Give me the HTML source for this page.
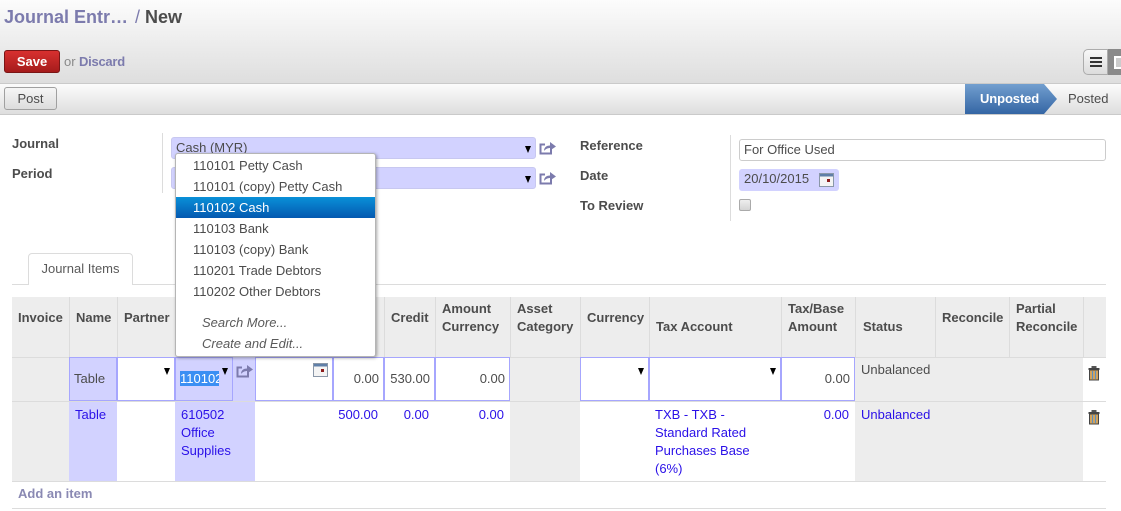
<!DOCTYPE html>
<html><head><meta charset="utf-8"><style>
html,body{margin:0;padding:0;background:#fff}
body{width:1121px;height:511px;overflow:hidden;position:relative;font:13px/18px "Liberation Sans",Arial,sans-serif;color:#4c4c4c}
.a,.a *{box-sizing:border-box}
.a{position:absolute;white-space:nowrap}
.b{font-weight:bold}
.g{background:#ededed}
.p{background:#d2d2ff}
.blue{color:#2a10e8}
.r{text-align:right}
.hd{font-weight:bold;color:#4c4c4c;line-height:18px}
.vl{width:1px;background:#dcdcdc;top:297px;height:60px}
.in{border:1px solid #a6a6fe;background:#fff}
.ip{border:1px solid #a6a6fe;background:#d2d2ff}
.ar{width:0;height:0;border-left:3.5px solid transparent;border-right:3.5px solid transparent;border-top:7px solid #000}
</style></head><body>
<!-- header -->
<div class="a" style="left:0;top:0;width:1121px;height:84px;background:linear-gradient(#fcfcfc,#dedede);border-bottom:1px solid #cacaca"></div>
<div class="a b" style="left:4px;top:6px;font-size:18px;line-height:22px;color:#7c7bad">Journal Entr…</div>
<div class="a" style="left:135px;top:6px;font-size:18px;line-height:22px;color:#7c7bad">/</div>
<div class="a b" style="left:145px;top:6px;font-size:18px;line-height:22px;color:#4c4c4c">New</div>
<div class="a b" style="left:4px;top:50px;width:56px;height:23px;border:1px solid #7a1616;border-radius:3px;background:linear-gradient(#d8302f,#a51c1c);color:#fff;text-align:center;line-height:21px;font-size:13px">Save</div>
<div class="a" style="left:64px;top:53px;color:#8a8a8a">or</div>
<div class="a b" style="left:79px;top:53px;color:#7c7bad;font-size:13px;letter-spacing:-.02em">Discard</div>
<!-- view switch -->
<div class="a" style="left:1083px;top:49px;width:25px;height:26px;border:1px solid #acacac;border-radius:5px 0 0 5px;background:linear-gradient(#f8f8f8,#dcdcdc)"></div>
<div class="a" style="left:1090px;top:57px;width:12px;height:2px;background:#333"></div>
<div class="a" style="left:1090px;top:61px;width:12px;height:2px;background:#333"></div>
<div class="a" style="left:1090px;top:65px;width:12px;height:2px;background:#333"></div>
<div class="a" style="left:1108px;top:49px;width:13px;height:26px;background:#8a8a8a"></div>
<div class="a" style="left:1114px;top:56px;width:7px;height:13px;border:2px solid #fff;border-right:0;background:#ccc"></div>
<!-- status bar -->
<div class="a" style="left:0;top:84px;width:1121px;height:31px;background:linear-gradient(#fcfcfc,#dedede);border-bottom:1px solid #cacaca"></div>
<div class="a" style="left:4px;top:87px;width:53px;height:23px;border:1px solid #a0a0a0;border-radius:3px;background:linear-gradient(#f6f6f6,#dcdcdc);text-align:center;line-height:21px;color:#4c4c4c">Post</div>
<svg class="a" style="left:965px;top:84px" width="94" height="31"><defs><linearGradient id="u" x1="0" y1="0" x2="0" y2="1"><stop offset="0" stop-color="#729fcf"/><stop offset="1" stop-color="#3465a4"/></linearGradient></defs><path d="M0 0H79L92 15L79 30H0Z" fill="url(#u)"/></svg>
<div class="a b" style="left:980px;top:90px;color:#fff;letter-spacing:-.1px">Unposted</div>
<div class="a" style="left:1068px;top:90px;color:#4c4c4c">Posted</div>
<!-- form -->
<div class="a b" style="left:12px;top:135px">Journal</div>
<div class="a b" style="left:12px;top:165px">Period</div>
<div class="a" style="left:162px;top:133px;width:1px;height:60px;background:#dcdcdc"></div>
<div class="a p" style="left:171px;top:137px;width:365px;height:22px;border-radius:3px;border:1px solid #c8c8f0;line-height:19px;padding-left:4px;color:#4c4c4c">Cash (MYR)</div>
<div class="a p" style="left:171px;top:167px;width:365px;height:22px;border-radius:3px;border:1px solid #c8c8f0"></div>
<div class="a ar" style="left:525px;top:146px"></div>
<div class="a ar" style="left:525px;top:176px"></div>
<svg class="a" style="left:539px;top:141px" width="18" height="15"><path d="M12 8V12.5H1.5V3.5H6" fill="none" stroke="#7c7bad" stroke-width="2"/><path d="M5 10C5 6 8 4.5 11 4.5V1L17 5.5L11 9.5V7C9 7 6.5 8 5 10Z" fill="#7c7bad"/></svg>
<svg class="a" style="left:539px;top:171px" width="18" height="15"><path d="M12 8V12.5H1.5V3.5H6" fill="none" stroke="#7c7bad" stroke-width="2"/><path d="M5 10C5 6 8 4.5 11 4.5V1L17 5.5L11 9.5V7C9 7 6.5 8 5 10Z" fill="#7c7bad"/></svg>
<div class="a b" style="left:580px;top:137px">Reference</div>
<div class="a b" style="left:580px;top:167px">Date</div>
<div class="a b" style="left:580px;top:197px">To Review</div>
<div class="a" style="left:730px;top:135px;width:1px;height:86px;background:#dcdcdc"></div>
<div class="a" style="left:739px;top:139px;width:367px;height:22px;border:1px solid #ccc;border-radius:3px;line-height:20px;padding-left:4px;color:#4c4c4c">For Office Used</div>
<div class="a p" style="left:739px;top:169px;width:100px;height:22px;border-radius:3px;line-height:20px;padding-left:5px;color:#4c4c4c">20/10/2015</div>
<svg class="a" style="left:819px;top:173px" width="15" height="14"><rect x=".5" y=".5" width="14" height="13" fill="#f4f4f4" stroke="#8a97a8"/><rect x="1" y="1" width="13" height="2.5" fill="#5f7fa8"/><rect x="8" y="6" width="3" height="3" fill="#8e1c1c"/></svg>
<div class="a" style="left:739px;top:199px;width:12px;height:12px;border:1px solid #aaa;border-radius:2px;background:linear-gradient(#eee,#d4d4d4)"></div>
<!-- tabs -->
<div class="a" style="left:12px;top:284px;width:1094px;height:1px;background:#dcdcdc"></div>
<div class="a" style="left:28px;top:253px;width:105px;height:32px;border:1px solid #dcdcdc;border-bottom:0;border-radius:4px 4px 0 0;background:#fff;text-align:center;line-height:29px;color:#5a5a5a">Journal Items</div>
<!-- table bg -->
<div class="a g" style="left:12px;top:297px;width:1094px;height:60px"></div>
<div class="a" style="left:12px;top:357px;width:1094px;height:1px;background:#dcdcdc"></div>
<div class="a g" style="left:12px;top:358px;width:57px;height:123px"></div>
<div class="a g" style="left:510px;top:358px;width:70px;height:123px"></div>
<div class="a g" style="left:855px;top:358px;width:228px;height:123px"></div>
<div class="a" style="left:12px;top:401px;width:1094px;height:1px;background:#dcdcdc"></div>
<div class="a" style="left:12px;top:481px;width:1094px;height:1px;background:#dcdcdc"></div>
<div class="a" style="left:12px;top:508px;width:1094px;height:1px;background:#dcdcdc"></div>
<div class="a vl" style="left:69px"></div><div class="a vl" style="left:117px"></div>
<div class="a vl" style="left:384px"></div><div class="a vl" style="left:435px"></div><div class="a vl" style="left:510px"></div>
<div class="a vl" style="left:580px"></div><div class="a vl" style="left:649px"></div><div class="a vl" style="left:781px"></div>
<div class="a vl" style="left:855px"></div><div class="a vl" style="left:935px"></div><div class="a vl" style="left:1009px"></div><div class="a vl" style="left:1083px"></div>
<!-- headers -->
<div class="a hd" style="left:18px;top:309px">Invoice</div>
<div class="a hd" style="left:76px;top:309px">Name</div>
<div class="a hd" style="left:124px;top:309px">Partner</div>
<div class="a hd" style="left:391px;top:309px">Credit</div>
<div class="a hd" style="left:442px;top:300px">Amount<br>Currency</div>
<div class="a hd" style="left:517px;top:300px">Asset<br>Category</div>
<div class="a hd" style="left:587px;top:309px">Currency</div>
<div class="a hd" style="left:656px;top:318px">Tax Account</div>
<div class="a hd" style="left:788px;top:300px">Tax/Base<br>Amount</div>
<div class="a hd" style="left:863px;top:318px">Status</div>
<div class="a hd" style="left:942px;top:309px">Reconcile</div>
<div class="a hd" style="left:1016px;top:300px">Partial<br>Reconcile</div>
<!-- row 1 -->
<div class="a ip" style="left:69px;top:357px;width:48px;height:44px;padding:12px 0 0 4px;color:#4c4c4c">Table</div>
<div class="a in" style="left:117px;top:357px;width:58px;height:44px"></div>
<div class="a ar" style="left:164px;top:368px"></div>
<div class="a p" style="left:175px;top:357px;width:80px;height:44px"></div>
<div class="a ip" style="left:175px;top:357px;width:58px;height:44px"></div>
<div class="a" style="left:180px;top:371px;width:39px;height:15px;line-height:15px;background:#3b8ff3;color:#fff;overflow:hidden;font-size:13px">110102</div>
<div class="a ar" style="left:222px;top:368px"></div>
<svg class="a" style="left:236px;top:364px" width="18" height="15"><path d="M12 8V12.5H1.5V3.5H6" fill="none" stroke="#7c7bad" stroke-width="2"/><path d="M5 10C5 6 8 4.5 11 4.5V1L17 5.5L11 9.5V7C9 7 6.5 8 5 10Z" fill="#7c7bad"/></svg>
<div class="a in" style="left:255px;top:357px;width:78px;height:44px"></div>
<svg class="a" style="left:313px;top:363px" width="15" height="14"><rect x=".5" y=".5" width="14" height="13" fill="#f4f4f4" stroke="#8a97a8"/><rect x="1" y="1" width="13" height="2.5" fill="#5f7fa8"/><rect x="8" y="6" width="3" height="3" fill="#8e1c1c"/></svg>
<div class="a in r" style="left:333px;top:357px;width:51px;height:44px;padding:12px 4px 0 0">0.00</div>
<div class="a in r" style="left:384px;top:357px;width:51px;height:44px;padding:12px 4px 0 0">530.00</div>
<div class="a in r" style="left:435px;top:357px;width:75px;height:44px;padding:12px 4px 0 0">0.00</div>
<div class="a in" style="left:580px;top:357px;width:69px;height:44px"></div>
<div class="a ar" style="left:638px;top:368px"></div>
<div class="a in" style="left:649px;top:357px;width:132px;height:44px"></div>
<div class="a ar" style="left:770px;top:368px"></div>
<div class="a in r" style="left:781px;top:357px;width:74px;height:44px;padding:12px 4px 0 0">0.00</div>
<div class="a" style="left:861px;top:361px">Unbalanced</div>
<!-- row 2 -->
<div class="a p" style="left:69px;top:402px;width:48px;height:79px"></div>
<div class="a blue" style="left:75px;top:406px">Table</div>
<div class="a p" style="left:175px;top:402px;width:80px;height:79px"></div>
<div class="a blue" style="left:181px;top:406px">610502<br>Office<br>Supplies</div>
<div class="a blue r" style="left:333px;top:406px;width:45px">500.00</div>
<div class="a blue r" style="left:384px;top:406px;width:45px">0.00</div>
<div class="a blue r" style="left:435px;top:406px;width:69px">0.00</div>
<div class="a blue" style="left:655px;top:406px">TXB - TXB -<br>Standard Rated<br>Purchases Base<br>(6%)</div>
<div class="a blue r" style="left:781px;top:406px;width:68px">0.00</div>
<div class="a blue" style="left:861px;top:406px">Unbalanced</div>
<svg class="a" style="left:1088px;top:366px" width="12" height="15"><rect x="3.5" y="0" width="5" height="2" fill="#555"/><rect x="0.5" y="2" width="11" height="2" fill="#444"/><rect x="1.5" y="4" width="9" height="10" fill="#d1a35e" stroke="#444"/><path d="M4.5 5V13M7.5 5V13" stroke="#5b8fc0"/></svg>
<svg class="a" style="left:1088px;top:410px" width="12" height="15"><rect x="3.5" y="0" width="5" height="2" fill="#555"/><rect x="0.5" y="2" width="11" height="2" fill="#444"/><rect x="1.5" y="4" width="9" height="10" fill="#d1a35e" stroke="#444"/><path d="M4.5 5V13M7.5 5V13" stroke="#5b8fc0"/></svg>
<div class="a b" style="left:18px;top:485px;color:#8a89b3">Add an item</div>
<!-- dropdown -->
<div class="a" style="left:175px;top:153px;width:201px;height:204px;background:#fff;border:1px solid #b5b5b5;border-radius:3px;box-shadow:1px 1px 3px rgba(0,0,0,.35)"></div>
<div class="a" style="left:176px;top:197px;width:199px;height:21px;background:linear-gradient(#0990d8,#0458b0)"></div>
<div class="a" style="left:193px;top:155px;line-height:21px">110101 Petty Cash<br>110101 (copy) Petty Cash<br><span style="color:#fff">110102 Cash</span><br>110103 Bank<br>110103 (copy) Bank<br>110201 Trade Debtors<br>110202 Other Debtors</div>
<div class="a" style="left:202px;top:312px;line-height:21px;font-style:italic;color:#5a5a5a">Search More...<br>Create and Edit...</div>
</body></html>
